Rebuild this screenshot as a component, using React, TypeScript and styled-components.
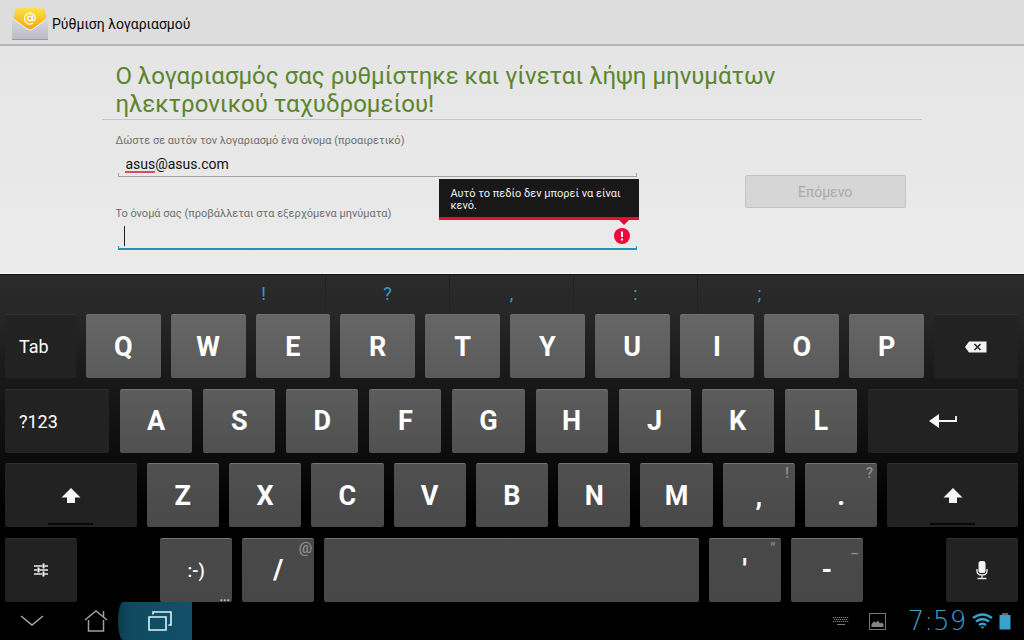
import React from "react";
import styled, { createGlobalStyle } from "styled-components";

const GlobalStyle = createGlobalStyle`
  *, *::before, *::after { box-sizing: border-box; }
  body { margin: 0; background: #000; font-family: Roboto, "Noto Sans", sans-serif; }
  button, input { font-family: inherit; margin: 0; }
`;

const Screen = styled.div`
  display: flex;
  flex-direction: column;
  min-height: 100vh;
`;

const ActionBar = styled.header`
  display: flex;
  align-items: center;
  gap: 4px;
  height: 46px;
  padding: 3px 12px 0;
  background: #dddddd;
  border-bottom: 2px solid #b4b4b4;
`;

const BarTitle = styled.h1`
  margin: 0;
  font-size: 14px;
  font-weight: 400;
  color: #0a0a0a;
`;

const Setup = styled.main`
  flex: 1;
  padding: 16px 10% 22px;
  background: linear-gradient(#e5e5e5, #ebebeb);
  border-bottom: 1px solid #fafafa;
`;

const Headline = styled.h2`
  margin: 0;
  padding: 0 13px 1px;
  border-bottom: 1px solid #c6c6c6;
  font-size: 24px;
  line-height: 28px;
  font-weight: 400;
  color: #5b852f;
`;

const FormRow = styled.form`
  display: flex;
  align-items: center;
  justify-content: space-between;
  padding: 13px 16px 0 13px;
`;

const Fields = styled.div`
  display: flex;
  flex-direction: column;
  gap: 29px;
  flex: 0 1 525px;
`;

const Field = styled.div`
  position: relative;
  display: flex;
  flex-direction: column;
`;

const FieldLabel = styled.label`
  font-size: 11px;
  line-height: 16px;
  color: #6f6f6f;
`;

const TextInput = styled.input<{ $active?: boolean }>`
  height: 28px;
  margin: 0 3px;
  padding: 5px 7px 3px;
  border: 0;
  outline: 0;
  font-size: 14px;
  color: #111;
  background:
    linear-gradient(${(p) => (p.$active ? "#2392bd, #2392bd" : "#a2a2a2, #a2a2a2")}) bottom / 100% ${(p) => (p.$active ? 2 : 1)}px no-repeat,
    linear-gradient(${(p) => (p.$active ? "#2392bd, #2392bd" : "#a2a2a2, #a2a2a2")}) left bottom / 1px 4px no-repeat,
    linear-gradient(${(p) => (p.$active ? "#2392bd, #2392bd" : "#a2a2a2, #a2a2a2")}) right bottom / 1px 4px no-repeat;
`;

const SpellMark = styled.span`
  position: absolute;
  left: 10px;
  bottom: 4px;
  width: 30px;
  height: 2px;
  background: #d0525c;
`;

const Caret = styled.span`
  position: absolute;
  left: 9px;
  bottom: 4px;
  width: 1px;
  height: 20px;
  background: #222;
`;

const ErrorIcon = styled.svg`
  position: absolute;
  right: 10px;
  bottom: 6px;
`;

const ErrorTip = styled.div`
  position: absolute;
  right: 1px;
  bottom: 30px;
  width: 200px;
  padding: 9px 11px 5px;
  background: #181818;
  border-bottom: 3px solid #dc1236;
  font-size: 11px;
  line-height: 12px;
  color: #f0f0f0;
  &::after {
    content: "";
    position: absolute;
    right: 10px;
    top: 100%;
    margin-top: 3px;
    border: 5px solid transparent;
    border-top-color: #dc1236;
    border-bottom: 0;
  }
`;

const NextButton = styled.button`
  width: 161px;
  height: 33px;
  border: 1px solid #c4c4c4;
  border-radius: 2px;
  background: #d6d6d6;
  font-size: 14px;
  color: #a9a9a9;
`;

const Keyboard = styled.section`
  background: linear-gradient(#2b2b2b 0, #272727 38px, #1b1b1b 90px, #0e0e0e 170px, #000 240px);
  border-top: 1px solid #111;
`;

const Suggestions = styled.div`
  display: flex;
  justify-content: center;
  height: 39px;
`;

const Suggestion = styled.button`
  flex: 0 1 124px;
  border: 0;
  border-right: 1px solid #222;
  padding: 0 0 2px;
  background: none;
  font-size: 18px;
  color: #339fc4;
  &:last-child { border-right-color: transparent; }
`;

const Keys = styled.div`
  display: flex;
  flex-direction: column;
  justify-content: space-between;
  height: 288px;
  padding: 0 6px 0 5px;
`;

const KeyRow = styled.div<{ $gap: number }>`
  display: flex;
  gap: ${(p) => p.$gap}px;
`;

const tones = {
  row1: "linear-gradient(#666, #5a5a5a)",
  row2: "linear-gradient(#5c5c5c, #505050)",
  row3: "linear-gradient(#505050, #494949)",
  row4: "linear-gradient(#494949, #474747)",
  dark: "#222",
};
type Tone = keyof typeof tones;

const Key = styled.button<{ $weight: number; $tone: Tone; $start?: boolean; $size?: number }>`
  position: relative;
  display: flex;
  align-items: center;
  justify-content: ${(p) => (p.$start ? "flex-start" : "center")};
  flex: ${(p) => p.$weight} 1 0;
  min-width: 0;
  height: 64px;
  padding: 0;
  text-indent: ${(p) => (p.$start ? 14 : 0)}px;
  border: 0;
  border-top: 1px solid ${(p) => (p.$tone === "dark" ? "#303030" : "#727272")};
  border-radius: 2px;
  background: ${(p) => tones[p.$tone]};
  font-size: ${(p) => p.$size ?? 27}px;
  font-weight: ${(p) => (p.$start ? 400 : p.$size ? 500 : 700)};
  color: #fff;
`;

const Spacer = styled.div<{ $weight: number }>`
  flex: ${(p) => p.$weight} 1 0;
`;

const Hint = styled.span`
  position: absolute;
  top: 0;
  right: 2px;
  min-width: 12px;
  font-size: 15px;
  line-height: 18px;
  font-weight: 500;
  text-align: center;
  color: #8f8f8f;
`;

const More = styled.span`
  position: absolute;
  right: 2px;
  bottom: 0;
  font-size: 13px;
  line-height: 10px;
  color: #ccc;
`;

const LockBar = styled.span`
  position: absolute;
  left: 33%;
  right: 33%;
  bottom: 2px;
  height: 2px;
  background: #080808;
`;

const SystemBar = styled.footer`
  display: flex;
  justify-content: space-between;
  height: 38px;
  background: #000;
`;

const Nav = styled.nav`
  display: flex;
`;

const NavButton = styled.button<{ $lit?: boolean }>`
  display: flex;
  align-items: center;
  justify-content: center;
  width: ${(p) => (p.$lit ? 74 : 64)}px;
  margin-left: ${(p) => (p.$lit ? -10 : 0)}px;
  padding: 0 0 0 ${(p) => (p.$lit ? 10 : 0)}px;
  border: 0;
  border-radius: ${(p) => (p.$lit ? "5px 0 0 5px / 50%" : 0)};
  background: ${(p) => (p.$lit ? "linear-gradient(90deg, #0b3c4c, #0f4b5f 12px, #12506a)" : "none")};
`;

const Status = styled.div`
  display: flex;
  align-items: center;
  padding-right: 13px;
`;

const StatusIcon = styled.svg<{ $after: number }>`
  margin-right: ${(p) => p.$after}px;
`;

const Clock = styled.time`
  width: 66px;
  margin-right: 2px;
  font-family: "DejaVu Sans", sans-serif;
  font-weight: 200;
  font-size: 26px;
  line-height: 38px;
  text-align: center;
  color: #3aa3cc;
`;

const MailLogo = () => (
  <svg width="36" height="34" viewBox="0 0 36 34" aria-hidden="true">
    <defs>
      <linearGradient id="flap" x1="0" y1="0" x2="0" y2="1">
        <stop offset="0" stopColor="#ffe24a" />
        <stop offset="1" stopColor="#f2a90a" />
      </linearGradient>
      <linearGradient id="paper" x1="0" y1="0" x2="0" y2="1">
        <stop offset="0" stopColor="#d8d8de" />
        <stop offset="1" stopColor="#bcbcc8" />
      </linearGradient>
    </defs>
    <path d="M0 11 3 5H33L36 11V33H0Z" fill="url(#paper)" />
    <path d="M3 2Q18-1 33 2L34 12 20 22Q18 23 16 22L2 12Z" fill="url(#flap)" />
    <path d="M0 11 15 22Q18 24 21 22L36 11V32H0Z" fill="url(#paper)" />
    <path d="M0 11 15 22Q18 24 21 22L36 11" fill="none" stroke="#eeeef2" />
    <path d="M0 32.5H36" stroke="#9c9ca6" />
    <g fill="none" stroke="#fff" strokeWidth="1.3" strokeLinecap="round">
      <circle cx="18" cy="11.500" r="2.300" />
      <path d="M20.300 9.300v3.200c0 2 3 1.500 3-1.500a5.400 5.400 0 1 0-2.600 5.300" />
    </g>
  </svg>
);

const ShiftIcon = () => (
  <svg width="20" height="16" viewBox="0 0 20 16" aria-hidden="true">
    <path d="M10 0 19.500 9.500H14V15H6V9.500H.5Z" fill="#f6f6f6" />
  </svg>
);

const DeleteIcon = () => (
  <svg width="22" height="12" viewBox="0 0 22 12" aria-hidden="true">
    <path d="M0 6 4 .5H21.500V11.500H4Z" fill="#f2f2f2" />
    <path d="m9.500 3 6 6m0-6-6 6" stroke="#222" strokeWidth="1.500" />
  </svg>
);

const EnterIcon = () => (
  <svg width="28" height="16" viewBox="0 0 28 16" aria-hidden="true">
    <path d="M0 8 10 1V15Z" fill="#f6f6f6" />
    <path d="M9 8H27V3" fill="none" stroke="#f6f6f6" strokeWidth="1.800" />
  </svg>
);

const TuneIcon = () => (
  <svg width="14" height="14" viewBox="0 0 14 14" aria-hidden="true">
    <path d="M0 3H8M10.500 3H14M0 7H3M5.500 7H14M0 11H8M10.500 11H14" stroke="#eee" strokeWidth="1.300" />
    <path d="M9.500 .5V5.500M4.500 4.500V9.500M9.500 8.500V13.500" stroke="#fff" strokeWidth="2" />
  </svg>
);

const MicIcon = () => (
  <svg width="12" height="19" viewBox="0 0 12 19" aria-hidden="true">
    <rect x="2.500" y="0" width="7" height="12" rx="2.500" fill="#f4f4f4" />
    <path d="M1 8V10Q1 14 6 14T11 10V8M6 14V17M1.500 17.500H10.500" fill="none" stroke="#e4e4e4" strokeWidth="1.400" />
  </svg>
);

function Letters({ text, weight, tone }: { text: string; weight: number; tone: Tone }) {
  return (
    <>
      {text.split("").map((c) => (
        <Key key={c} type="button" $weight={weight} $tone={tone}>{c}</Key>
      ))}
    </>
  );
}

export default function App() {
  return (
    <Screen>
      <GlobalStyle />
      <ActionBar>
        <MailLogo />
        <BarTitle>Ρύθμιση λογαριασμού</BarTitle>
      </ActionBar>

      <Setup>
        <Headline>
          Ο λογαριασμός σας ρυθμίστηκε και γίνεται λήψη μηνυμάτων
          <br />
          ηλεκτρονικού ταχυδρομείου!
        </Headline>
        <FormRow>
          <Fields>
            <Field>
              <FieldLabel htmlFor="account">Δώστε σε αυτόν τον λογαριασμό ένα όνομα (προαιρετικό)</FieldLabel>
              <TextInput id="account" type="text" defaultValue="asus@asus.com" spellCheck={false} />
              <SpellMark />
            </Field>
            <Field>
              <FieldLabel htmlFor="sender">Το όνομά σας (προβάλλεται στα εξερχόμενα μηνύματα)</FieldLabel>
              <TextInput id="sender" type="text" $active aria-describedby="sender-error" />
              <Caret />
              <ErrorIcon width="16" height="16" viewBox="0 0 16 16" aria-hidden="true">
                <circle cx="8" cy="8" r="8" fill="#f0083c" />
                <path d="M8 3.500V9M8 10.500V12.500" stroke="#fff" strokeWidth="2" />
              </ErrorIcon>
              <ErrorTip id="sender-error" role="alert">Αυτό το πεδίο δεν μπορεί να είναι κενό.</ErrorTip>
            </Field>
          </Fields>
          <NextButton type="button" disabled>Επόμενο</NextButton>
        </FormRow>
      </Setup>

      <Keyboard>
        <Suggestions>
          {["!", "?", ",", ":", ";"].map((s) => (
            <Suggestion key={s} type="button">{s}</Suggestion>
          ))}
        </Suggestions>
        <Keys>
          <KeyRow $gap={10}>
            <Key type="button" $weight={71} $tone="dark" $start $size={18}>Tab</Key>
            <Letters text="QWERTYUIOP" weight={75} tone="row1" />
            <Key type="button" $weight={84} $tone="dark" aria-label="Delete"><DeleteIcon /></Key>
          </KeyRow>
          <KeyRow $gap={11}>
            <Key type="button" $weight={104} $tone="dark" $start $size={18}>?123</Key>
            <Letters text="ASDFGHJKL" weight={72} tone="row2" />
            <Key type="button" $weight={150} $tone="dark" aria-label="Enter"><EnterIcon /></Key>
          </KeyRow>
          <KeyRow $gap={10}>
            <Key type="button" $weight={131} $tone="dark" aria-label="Shift"><ShiftIcon /><LockBar /></Key>
            <Letters text="ZXCVBNM" weight={72} tone="row3" />
            <Key type="button" $weight={72} $tone="row3">,<Hint>!</Hint></Key>
            <Key type="button" $weight={72} $tone="row3">.<Hint>?</Hint></Key>
            <Key type="button" $weight={130} $tone="dark" aria-label="Shift"><ShiftIcon /><LockBar /></Key>
          </KeyRow>
          <KeyRow $gap={10}>
            <Key type="button" $weight={72} $tone="dark" aria-label="Settings"><TuneIcon /></Key>
            <Spacer $weight={63} />
            <Key type="button" $weight={72} $tone="row4" $size={18}>:-)<More>...</More></Key>
            <Key type="button" $weight={72} $tone="row4">/<Hint>@</Hint></Key>
            <Key type="button" $weight={374} $tone="row4" aria-label="Space" />
            <Key type="button" $weight={72} $tone="row4">'<Hint>"</Hint></Key>
            <Key type="button" $weight={72} $tone="row4">-<Hint>_</Hint></Key>
            <Spacer $weight={63} />
            <Key type="button" $weight={72} $tone="dark" aria-label="Voice input"><MicIcon /></Key>
          </KeyRow>
        </Keys>
      </Keyboard>

      <SystemBar>
        <Nav>
          <NavButton type="button" aria-label="Hide keyboard">
            <svg width="24" height="12" viewBox="0 0 24 12" aria-hidden="true">
              <path d="M1 1 12 10 23 1" fill="none" stroke="#a8a8a8" strokeWidth="1.500" />
            </svg>
          </NavButton>
          <NavButton type="button" aria-label="Home">
            <svg width="24" height="22" viewBox="0 0 24 22" aria-hidden="true">
              <path d="M1 10 12 1 23 10M19.500 7V1M4.500 10V21H19.500V10" fill="none" stroke="#a0a0a0" strokeWidth="1.500" />
            </svg>
          </NavButton>
          <NavButton type="button" $lit aria-label="Recent apps">
            <svg width="24" height="20" viewBox="0 0 24 20" fill="none" stroke="#d8f4ff" strokeWidth="1.600" aria-hidden="true">
              <path d="M1 6H18V19H1ZM5 3.500V1H23V14H20.500" />
            </svg>
          </NavButton>
        </Nav>
        <Status>
          <StatusIcon $after={20} width="16" height="10" viewBox="0 0 16 10" stroke="#777" aria-hidden="true">
            <path d="M0 1.500H16M1 3.500H15M0 5.500H16" strokeDasharray="1.300 .7" />
            <path d="M4 8.500H12" />
          </StatusIcon>
          <StatusIcon $after={18} width="17" height="17" viewBox="0 0 17 17" aria-hidden="true">
            <rect x=".5" y=".5" width="16" height="16" fill="none" stroke="#777" />
            <path d="M2.500 14V11L5 8.500 7 9.500 9 7.500 11 10.500 13 9.500 14.500 11.500V14Z" fill="#858585" />
          </StatusIcon>
          <Clock>7:59</Clock>
          <StatusIcon $after={6} width="21" height="16" viewBox="0 0 21 16" fill="none" stroke="#36a0cb" strokeWidth="2.600" aria-hidden="true">
            <path d="M1 5Q10.500-2 20 5M4 8.500Q10.500 3.700 17 8.500M7 12Q10.500 9.500 14 12" />
            <path d="M8.500 13.500H12.500L10.500 16Z" fill="#36a0cb" stroke="none" />
          </StatusIcon>
          <StatusIcon $after={0} width="12" height="17" viewBox="0 0 12 17" aria-hidden="true">
            <path d="M3 0H9V2H3Z" fill="#6e6058" />
            <path d="M.5 2H11.500V16.500H.5Z" fill="#3aa3cc" />
          </StatusIcon>
        </Status>
      </SystemBar>
    </Screen>
  );
}
